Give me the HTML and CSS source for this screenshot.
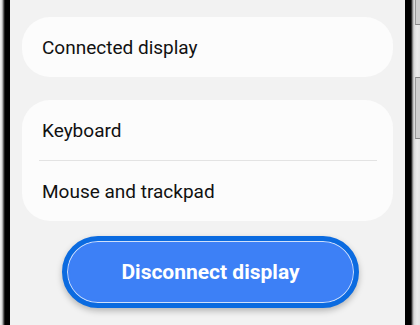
FILE: index.html
```html
<!DOCTYPE html>
<html lang="en">
<head>
    <meta charset="UTF-8">
    <title>Connected devices</title>
    <link rel="stylesheet" href="styles.css">
</head>
<body>
    <div class="phone">
        <div class="bezel-left"></div>
        <div class="screen">
            <div class="card">
                <div class="row">Connected display</div>
            </div>
            <div class="card">
                <div class="row">Keyboard</div>
                <div class="divider"></div>
                <div class="row">Mouse and trackpad</div>
            </div>
            <div class="actions">
                <button class="btn-disconnect">Disconnect display</button>
            </div>
        </div>
        <div class="bezel-right">
            <span class="side-key key-top"></span>
            <span class="side-key key-volume"></span>
        </div>
    </div>
</body>
</html>
```

FILE: styles.css
```css
body {
    margin: 0;
    font-family: Roboto, "Noto Sans", Arial, sans-serif;
    background: #f2f2f2;
}
.phone {
    display: flex;
    width: 420px;
    height: 325px;
    overflow: hidden;
}
.bezel-left {
    width: 10px;
    background: linear-gradient(90deg, #f2f2f2 0, #d6d6d6 2px, #8a8a8a 3px, #3a3a3a 4px, #000 5px, #000 10px);
}
.screen {
    flex: 1;
    background: #f2f2f2;
    padding: 17px 12px 0;
    display: flex;
    flex-direction: column;
    gap: 23px;
}
.card {
    background: #fcfcfc;
    border-radius: 28px;
}
.row {
    height: 60px;
    display: flex;
    align-items: center;
    padding-left: 20px;
    padding-top: 1px;
    box-sizing: border-box;
    font-size: 19px;
    color: #111;
}
.divider {
    height: 1px;
    background: #e3e3e3;
    margin: 0 16px 0 17px;
}
.actions {
    display: flex;
    justify-content: center;
    padding-left: 6px;
    margin-top: -8px;
}
.btn-disconnect {
    width: 297px;
    height: 72px;
    border-radius: 36px;
    border: 5px solid #0b6be0;
    background: #3d80f6;
    box-shadow: inset 0 0 0 1px #cfe0fb, inset 0 0 0 3px #3d80f6, 0 3px 6px rgba(0, 0, 0, 0.25);
    color: #fff;
    font-family: inherit;
    font-size: 21px;
    font-weight: bold;
}
.bezel-right {
    position: relative;
    width: 15px;
    background: linear-gradient(90deg, #000 0, #000 6px, #5a5a5a 7px, #a8a8a8 8px, #d9d9d9 9px, #ececec 12px, #e4e4e4 15px);
}
.side-key {
    position: absolute;
    right: 0;
    width: 4px;
    background: #d0d0d0;
    border-left: 1px solid #9a9a9a;
}
.key-top {
    top: 0;
    height: 24px;
    border-bottom: 1px solid #888;
}
.key-volume {
    top: 77px;
    height: 60px;
    border-top: 1px solid #888;
    border-bottom: 1px solid #888;
}
```
